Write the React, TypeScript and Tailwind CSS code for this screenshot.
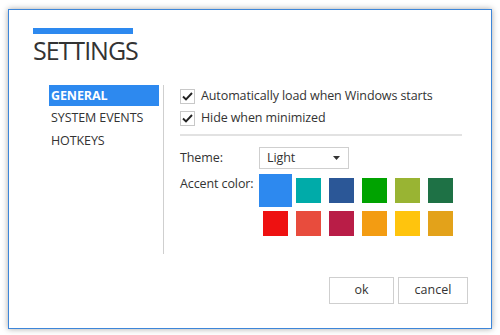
import React from "react";

const Check = () => (
  <svg width="11" height="9" viewBox="0 0 11 9" className="block">
    <path d="M1 4.5 L4 7.5 L10 1" fill="none" stroke="#222" strokeWidth="1.9" />
  </svg>
);

const CheckRow = ({ label }: { label: string }) => (
  <div className="flex items-center h-[22px]">
    <div className="w-[15px] h-[15px] border border-[#c8c8c8] bg-white flex items-center justify-center">
      <Check />
    </div>
    <span className="ml-[6px] text-[12.5px] tracking-[-0.1px] text-[#333]">{label}</span>
  </div>
);

const colors = [
  "#2d89ef", "#00aba9", "#2b5797", "#00a300", "#99b433", "#1e7145",
  "#ee1111", "#e84c3d", "#b91d47", "#f39c12", "#ffc40d", "#e3a21a",
];

export default function App() {
  return (
    <div
      className="w-[500px] h-[335px] bg-white pl-[8px] pt-[9px]"
      style={{ fontFamily: '"Open Sans", "Noto Sans", sans-serif' }}
    >
      <div className="w-[484px] h-[320px] bg-white border border-[#3d86d9] shadow-[0_0_6px_rgba(0,0,0,0.35)] flex flex-col">
        <div className="pl-[24px] pt-[18px]">
          <div className="w-[100px] h-[6px] bg-[#2d89ef]" />
          <div className="mt-[1px] text-[25px] leading-[30px] text-[#333] tracking-[-1px]">SETTINGS</div>
        </div>
        <div className="flex mt-[20px] pl-[40px]">
          <div className="w-[110px] flex flex-col gap-[1px]">
            <div className="h-[21px] bg-[#2d89ef] text-white font-bold text-[12.5px] tracking-[-0.1px] leading-[21px] pl-[2px]">GENERAL</div>
            <div className="h-[22px] text-[#333] text-[12.5px] tracking-[-0.1px] leading-[22px] pl-[2px]">SYSTEM EVENTS</div>
            <div className="h-[22px] text-[#333] text-[12.5px] tracking-[-0.1px] leading-[22px] pl-[2px]">HOTKEYS</div>
          </div>
          <div className="ml-[4px] w-px h-[169px] bg-[#cfcfcf]" />
          <div className="ml-[16px] w-[282px]">
            <CheckRow label="Automatically load when Windows starts" />
            <CheckRow label="Hide when minimized" />
            <div className="mt-[5px] h-[2px] bg-[#e2e2e2]" />
            <div className="mt-[11px] flex items-center">
              <div className="w-[79px] text-[12.5px] tracking-[-0.1px] text-[#333]">Theme:</div>
              <div className="w-[90px] h-[22px] border border-[#cfcfcf] flex items-center justify-between pl-[7px] pr-[8px]">
                <span className="text-[12.5px] tracking-[-0.1px] text-[#333]">Light</span>
                <svg width="7" height="4" viewBox="0 0 7 4"><path d="M0 0 H7 L3.5 4 Z" fill="#333" /></svg>
              </div>
            </div>
            <div className="mt-[5px] flex">
              <div className="w-[79px] text-[12.5px] tracking-[-0.1px] text-[#333] leading-[20px]">Accent color:</div>
              <div className="grid grid-cols-[repeat(6,33px)] grid-rows-[repeat(2,33px)]">
                {colors.map((c, i) => (
                  <div key={i} className="flex items-center justify-center">
                    <div
                      className={i === 0 ? "w-[33px] h-[33px]" : "w-[25px] h-[25px]"}
                      style={{ backgroundColor: c }}
                    />
                  </div>
                ))}
              </div>
            </div>
          </div>
        </div>
        <div className="flex-1" />
        <div className="flex justify-end gap-[4px] pr-[23px] pb-[24px]">
          <button className="w-[65px] h-[27px] border border-[#cfcfcf] bg-white text-[12.5px] text-[#333]">ok</button>
          <button className="w-[70px] h-[27px] border border-[#cfcfcf] bg-white text-[12.5px] text-[#333]">cancel</button>
        </div>
      </div>
    </div>
  );
}
